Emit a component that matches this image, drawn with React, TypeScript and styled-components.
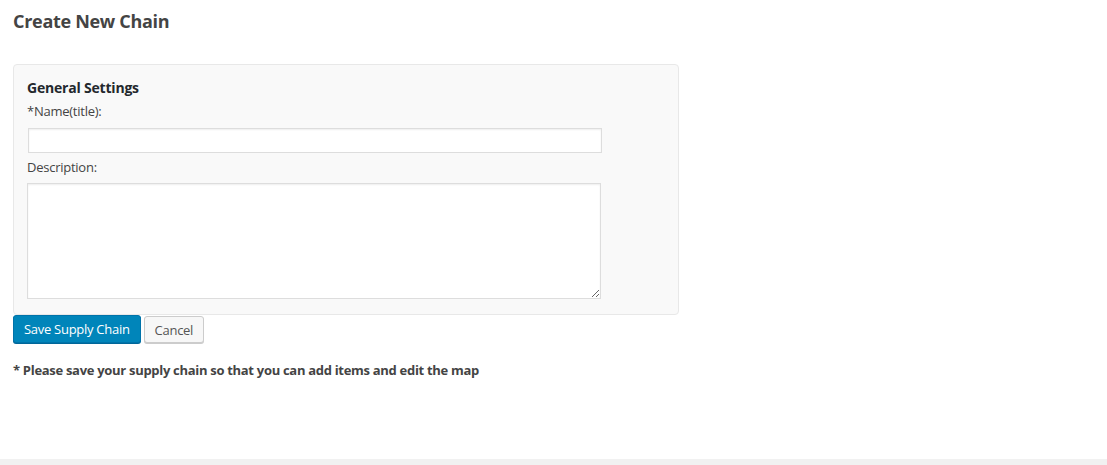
import React from "react";
import styled, { createGlobalStyle } from "styled-components";

const Global = createGlobalStyle`
  html, body { margin: 0; padding: 0; background: #f1f1f1; }
  body { font-family: "Open Sans", "Noto Sans", sans-serif; color: #444; font-size: 13px; letter-spacing: -0.25px; }
  * { box-sizing: border-box; }
`;

const Page = styled.div`
  background: #fff;
  height: 459px;
  padding: 8px 13px 0 13px;
`;

const Title = styled.h2`
  margin: 0;
  font-size: 18px;
  line-height: 26px;
  font-weight: 700;
  letter-spacing: -0.3px;
  color: #444;
`;

const Panel = styled.section`
  margin-top: 30px;
  width: 666px;
  background: #f9f9f9;
  border: 1px solid #e8e8e8;
  border-radius: 4px;
  padding: 13px 13px 15px 13px;
`;

const PanelTitle = styled.h3`
  margin: 0;
  font-size: 14px;
  line-height: 20px;
  font-weight: 700;
  letter-spacing: -0.2px;
  color: #23282d;
`;

const Label = styled.label`
  display: block;
  margin-top: 4px;
  line-height: 18px;
  color: #444;
`;

const TextInput = styled.input`
  display: block;
  margin-top: 8px;
  margin-left: 1px;
  width: 574px;
  height: 25px;
  border: 1px solid #ddd;
  box-shadow: inset 0 1px 2px rgba(0,0,0,0.07);
  background: #fff;
  font: inherit;
  outline: none;
`;

const DescLabel = styled(Label)`
  margin-top: 5px;
`;

const TextArea = styled.textarea`
  display: block;
  margin-top: 7px;
  width: 574px;
  height: 116px;
  border: 1px solid #ddd;
  box-shadow: inset 0 1px 2px rgba(0,0,0,0.07);
  background: #fff;
  font: inherit;
  outline: none;
`;

const Actions = styled.div`
  display: flex;
  gap: 3px;
  align-items: flex-start;
`;

const Button = styled.button<{ $primary?: boolean }>`
  padding: 0 10px;
  font: inherit;
  font-size: 13px;
  line-height: 26px;
  letter-spacing: -0.28px;
  border-radius: 3px;
  cursor: pointer;
  border: 1px solid ${(p) => (p.$primary ? "#0073aa" : "#ccc")};
  background: ${(p) => (p.$primary ? "#0085ba" : "#f7f7f7")};
  color: ${(p) => (p.$primary ? "#fff" : "#555")};
  box-shadow: ${(p) => (p.$primary ? "0 1px 0 #006799" : "0 1px 0 #ccc")};
  margin-top: ${(p) => (p.$primary ? "0" : "1px")};
  height: ${(p) => (p.$primary ? "28px" : "27px")};
`;

const Note = styled.p`
  margin: 18px 0 0 0;
  font-weight: 700;
  font-size: 13px;
  line-height: 18px;
  letter-spacing: -0.3px;
  color: #444;
`;

export default function App() {
  return (
    <>
      <Global />
      <Page>
        <Title>Create New Chain</Title>
        <Panel>
          <PanelTitle>General Settings</PanelTitle>
          <Label>*Name(title):</Label>
          <TextInput type="text" />
          <DescLabel>Description:</DescLabel>
          <TextArea />
        </Panel>
        <Actions>
          <Button $primary>Save Supply Chain</Button>
          <Button>Cancel</Button>
        </Actions>
        <Note>* Please save your supply chain so that you can add items and edit the map</Note>
      </Page>
    </>
  );
}
